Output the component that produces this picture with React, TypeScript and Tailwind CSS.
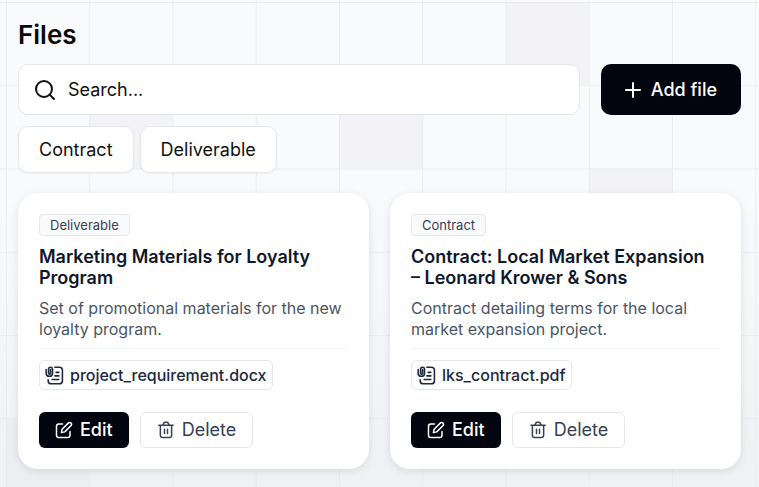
import { Plus, Search } from 'lucide-react';

type FileType = 'Contract' | 'Deliverable';

interface FileItem {
  id: number;
  type: FileType;
  title: string;
  description: string;
  fileName: string;
}

const filters: FileType[] = ['Contract', 'Deliverable'];

const files: FileItem[] = [
  {
    id: 1,
    type: 'Deliverable',
    title: 'Marketing Materials for Loyalty Program',
    description: 'Set of promotional materials for the new loyalty program.',
    fileName: 'project_requirement.docx'
  },
  {
    id: 2,
    type: 'Contract',
    title: 'Contract: Local Market Expansion – Leonard Krower & Sons',
    description: 'Contract detailing terms for the local market expansion project.',
    fileName: 'lks_contract.pdf'
  }
];

// column / row of the shaded squares in the background grid
const shadedCells = [
  [6, 0],
  [1, 1],
  [4, 1],
  [7, 2],
  [0, 5]
];

const CELL = 83.25;

function GridBackground() {
  return (
    <svg className="absolute inset-0 size-full" aria-hidden="true">
      <defs>
        <pattern id="grid" x="6" y="2" width={CELL} height={CELL} patternUnits="userSpaceOnUse">
          <path d={`M.5 ${CELL}V.5H${CELL}`} fill="none" stroke="#e6e8ec" strokeOpacity="0.75" />
        </pattern>
      </defs>
      {shadedCells.map(([col, row]) => (
        <rect
          key={`${col}-${row}`}
          x={6 + col * CELL}
          y={2 + row * CELL}
          width={CELL}
          height={CELL}
          fill="#e4e6ea"
          fillOpacity="0.3"
        />
      ))}
      <rect width="100%" height="100%" fill="url(#grid)" />
    </svg>
  );
}

function AttachmentIcon() {
  return (
    <svg
      className="size-[19px] shrink-0"
      viewBox="0 0 24 24"
      fill="none"
      stroke="currentColor"
      strokeWidth="2"
      strokeLinecap="round"
      strokeLinejoin="round"
      aria-hidden="true"
    >
      <path d="M12.500 1.500H18a4 4 0 0 1 4 4v13a4 4 0 0 1-4 4H8a4 4 0 0 1-4-4V17.500" />
      <path d="M1.500 4.500V9a4 4 0 0 0 8 0V4a2.500 2.500 0 0 0-5 0v5a1.200 1.200 0 0 0 2.500 0V4.500" />
      <path d="M14 8h3.500M12.500 12.500h5M9 17h8.500" />
    </svg>
  );
}

function EditIcon() {
  return (
    <svg
      className="size-[18px] shrink-0"
      viewBox="0 0 24 24"
      fill="none"
      stroke="currentColor"
      strokeWidth="2"
      strokeLinecap="round"
      strokeLinejoin="round"
      aria-hidden="true"
    >
      <path d="M10 4H5a3 3 0 0 0-3 3v12a3 3 0 0 0 3 3h12a3 3 0 0 0 3-3v-5" />
      <path d="M18 2.500a2.500 2.500 0 0 1 3.500 3.500L13 14.500 8.500 15.500l1-4.500z" />
    </svg>
  );
}

function TrashIcon() {
  return (
    <svg
      className="size-[18px] shrink-0"
      viewBox="0 0 24 24"
      fill="none"
      stroke="currentColor"
      strokeWidth="2"
      strokeLinecap="round"
      strokeLinejoin="round"
      aria-hidden="true"
    >
      <path d="M2.500 5.500h19M4.500 5.500V19a3 3 0 0 0 3 3h9a3 3 0 0 0 3-3V5.500" />
      <path d="M8 5.500l1-2.500a2 2 0 0 1 1.800-1.200h2.400A2 2 0 0 1 15 3l1 2.500" />
      <path d="M10 11v5.500M14 11v5.500" />
    </svg>
  );
}

function FileCard({ file }: { file: FileItem }) {
  return (
    <article className="flex flex-col items-start rounded-[20px] bg-white p-[21px] shadow-[0_2px_8px_rgba(15,23,42,0.10)]">
      <span className="rounded border border-gray-200 bg-gray-50 px-[10px] text-[13px] leading-5 text-gray-700">
        {file.type}
      </span>
      <h2 className="mt-[10px] pr-2 text-lg leading-[21px] font-semibold text-slate-900">{file.title}</h2>
      <p className="mt-[10px] text-base leading-[21px] text-gray-600">{file.description}</p>
      <hr className="mt-2 w-full border-gray-100" />
      <a
        href="#"
        className="mt-[11px] flex h-[30px] items-center gap-[6px] rounded-md border border-gray-200 px-[5px] text-base font-medium text-slate-800"
      >
        <AttachmentIcon />
        {file.fileName}
      </a>
      <div className="mt-[22px] flex gap-[11px]">
        <button className="flex h-9 items-center gap-[7px] rounded-md bg-[#02040f] px-4 text-lg font-medium text-white">
          <EditIcon />
          Edit
        </button>
        <button className="flex h-9 items-center gap-[7px] rounded-md border border-gray-200 bg-white px-4 text-lg text-gray-700">
          <TrashIcon />
          Delete
        </button>
      </div>
    </article>
  );
}

export default function App() {
  return (
    <div className="relative min-h-screen bg-linear-to-b from-[#f9fafc] from-40% to-[#f0f1f3] font-['Inter',sans-serif]">
      <GridBackground />
      <main className="relative px-[18px] py-[18px]">
        <h1 className="text-[26px] leading-[34px] font-semibold text-[#09090b]">Files</h1>

        <div className="mt-3 flex gap-[21px]">
          <label className="flex h-[51px] flex-1 items-center gap-[11px] rounded-[10px] border border-gray-200 bg-white px-[14px]">
            <Search className="size-6 shrink-0 text-[#111111]" />
            <input
              type="text"
              aria-label="Search files"
              placeholder="Search..."
              className="w-full bg-transparent text-lg text-[#111111] outline-none placeholder:text-[#111111]"
            />
          </label>
          <button className="flex h-[51px] items-center gap-[6px] rounded-[10px] bg-[#02040f] pr-6 pl-5 text-lg font-medium text-white">
            <Plus className="size-6" />
            Add file
          </button>
        </div>

        <div className="mt-[11px] flex gap-[6px]">
          {filters.map((filter) => (
            <button
              key={filter}
              className="h-[47px] rounded-[10px] border border-gray-200 bg-white px-5 text-lg text-[#111111] shadow-xs"
            >
              {filter}
            </button>
          ))}
        </div>

        <div className="mt-5 grid grid-cols-2 gap-[21px]">
          {files.map((file) => (
            <FileCard key={file.id} file={file} />
          ))}
        </div>
      </main>
    </div>
  );
}
